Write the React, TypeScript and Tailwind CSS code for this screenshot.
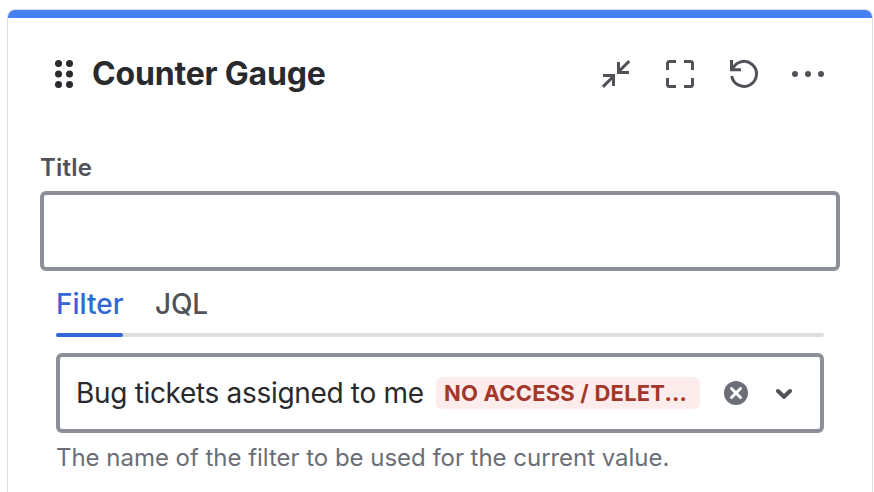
function CollapseIcon() {
  return (
    <svg width="32" height="32" viewBox="0 0 32 32" fill="none" stroke="#505258" strokeWidth="3">
      <path d="M29.2 3.1 18.5 13.8M18.5 4v10.500H29M2.900 28.900 13.500 18.300M3 17.600h10.500V28" />
    </svg>
  );
}

function FullscreenIcon() {
  return (
    <svg width="32" height="32" viewBox="0 0 32 32" fill="none" stroke="#505258" strokeWidth="3">
      <path d="M3.5 12V5.5a2 2 0 0 1 2-2H12M20 3.5h6.5a2 2 0 0 1 2 2V12M28.500 20v6.500a2 2 0 0 1-2 2H20M12 28.500H5.500a2 2 0 0 1-2-2V20" />
    </svg>
  );
}

function UndoIcon() {
  return (
    <svg width="32" height="32" viewBox="0 0 32 32" fill="none" stroke="#505258" strokeWidth="3">
      <path d="M3.500 2v9.700H13M4.250 11.700A12.500 12.500 0 1 1 3.700 18" />
    </svg>
  );
}

function MoreIcon() {
  return (
    <svg width="32" height="32" viewBox="0 0 32 32" fill="#505258">
      <circle cx="3" cy="16" r="3" />
      <circle cx="16" cy="16" r="3" />
      <circle cx="29" cy="16" r="3" />
    </svg>
  );
}

function GripIcon() {
  return (
    <svg width="32" height="32" viewBox="0 0 32 32" fill="#292a2e">
      <circle cx="10.500" cy="5.500" r="3.500" />
      <circle cx="21.500" cy="5.500" r="3.500" />
      <circle cx="10.500" cy="16" r="3.500" />
      <circle cx="21.500" cy="16" r="3.500" />
      <circle cx="10.500" cy="26.500" r="3.500" />
      <circle cx="21.500" cy="26.500" r="3.500" />
    </svg>
  );
}

export default function App() {
  return (
    <div className="h-[492px] w-[874px] overflow-hidden bg-white px-[7px] pt-[9px] font-['Inter',sans-serif]">
      <section className="h-[520px] w-[866px] overflow-hidden rounded-t-[8px] border border-[#dddee1] bg-white">
        <div className="h-2 bg-[#4680f6]" />
        <header className="mt-10 flex h-8 items-center pl-10">
          <GripIcon />
          <h1 className="ml-3 w-[508px] whitespace-nowrap text-[32px] leading-8 font-bold tracking-[-0.18px] text-[#292a2e]">Counter Gauge</h1>
          <div className="flex gap-8">
            <CollapseIcon />
            <FullscreenIcon />
            <UndoIcon />
            <MoreIcon />
          </div>
        </header>
        <div className="px-8 pt-[62px]">
          <label htmlFor="title" className="block h-[39px] text-[24px] leading-8 font-semibold tracking-[0.2px] text-[#505258]">Title</label>
          <input id="title" className="block h-20 w-full rounded-[6px] border-4 border-[#8c8f97] bg-white px-3 outline-none" />
          <div className="px-4">
            <nav className="relative mt-[13px] flex h-[53px] gap-8 text-[28px] leading-10 font-medium">
              <span className="absolute inset-x-0 bottom-0 h-1 rounded-full bg-[#dddedd]" />
              <button className="relative h-[53px] w-[67px] whitespace-nowrap pb-[13px] text-left text-[#3366d6]">
                Filter
                <span className="absolute bottom-0 left-0 h-1 w-full rounded-full bg-[#3366d6]" />
              </button>
              <button className="h-[53px] pb-[13px] tracking-[-0.2px] text-[#505258]">JQL</button>
            </nav>
            <div className="mt-4 flex h-20 items-center rounded-[6px] border-4 border-[#8c8f97] pl-4">
              <span className="w-[360px] whitespace-nowrap text-[28px] leading-10 tracking-[-0.32px] text-[#292a2e]">Bug tickets assigned to me</span>
              <span className="flex h-8 w-[264px] items-center rounded-[6px] bg-[#fdecec] pl-2 text-[22px] leading-8 font-bold tracking-[0.2px] whitespace-nowrap text-[#a2372a]">NO ACCESS / DELET...</span>
              <svg className="ml-6" width="24" height="24" viewBox="0 0 24 24" fill="none">
                <circle cx="12" cy="12" r="12" fill="#6b6e76" />
                <path d="m7.500 7.500 9 9m0-9-9 9" stroke="white" strokeWidth="3" strokeLinecap="round" />
              </svg>
              <svg className="ml-7" width="16" height="16" viewBox="0 0 16 16" fill="none" stroke="#505258" strokeWidth="4" strokeLinecap="round" strokeLinejoin="round">
                <path d="m2 6 6 5.800L14 6" />
              </svg>
            </div>
            <p className="mt-[9px] whitespace-nowrap text-[24px] leading-8 tracking-[-0.03px] text-[#6b6e76]">The name of the filter to be used for the current value.</p>
          </div>
        </div>
      </section>
    </div>
  );
}
